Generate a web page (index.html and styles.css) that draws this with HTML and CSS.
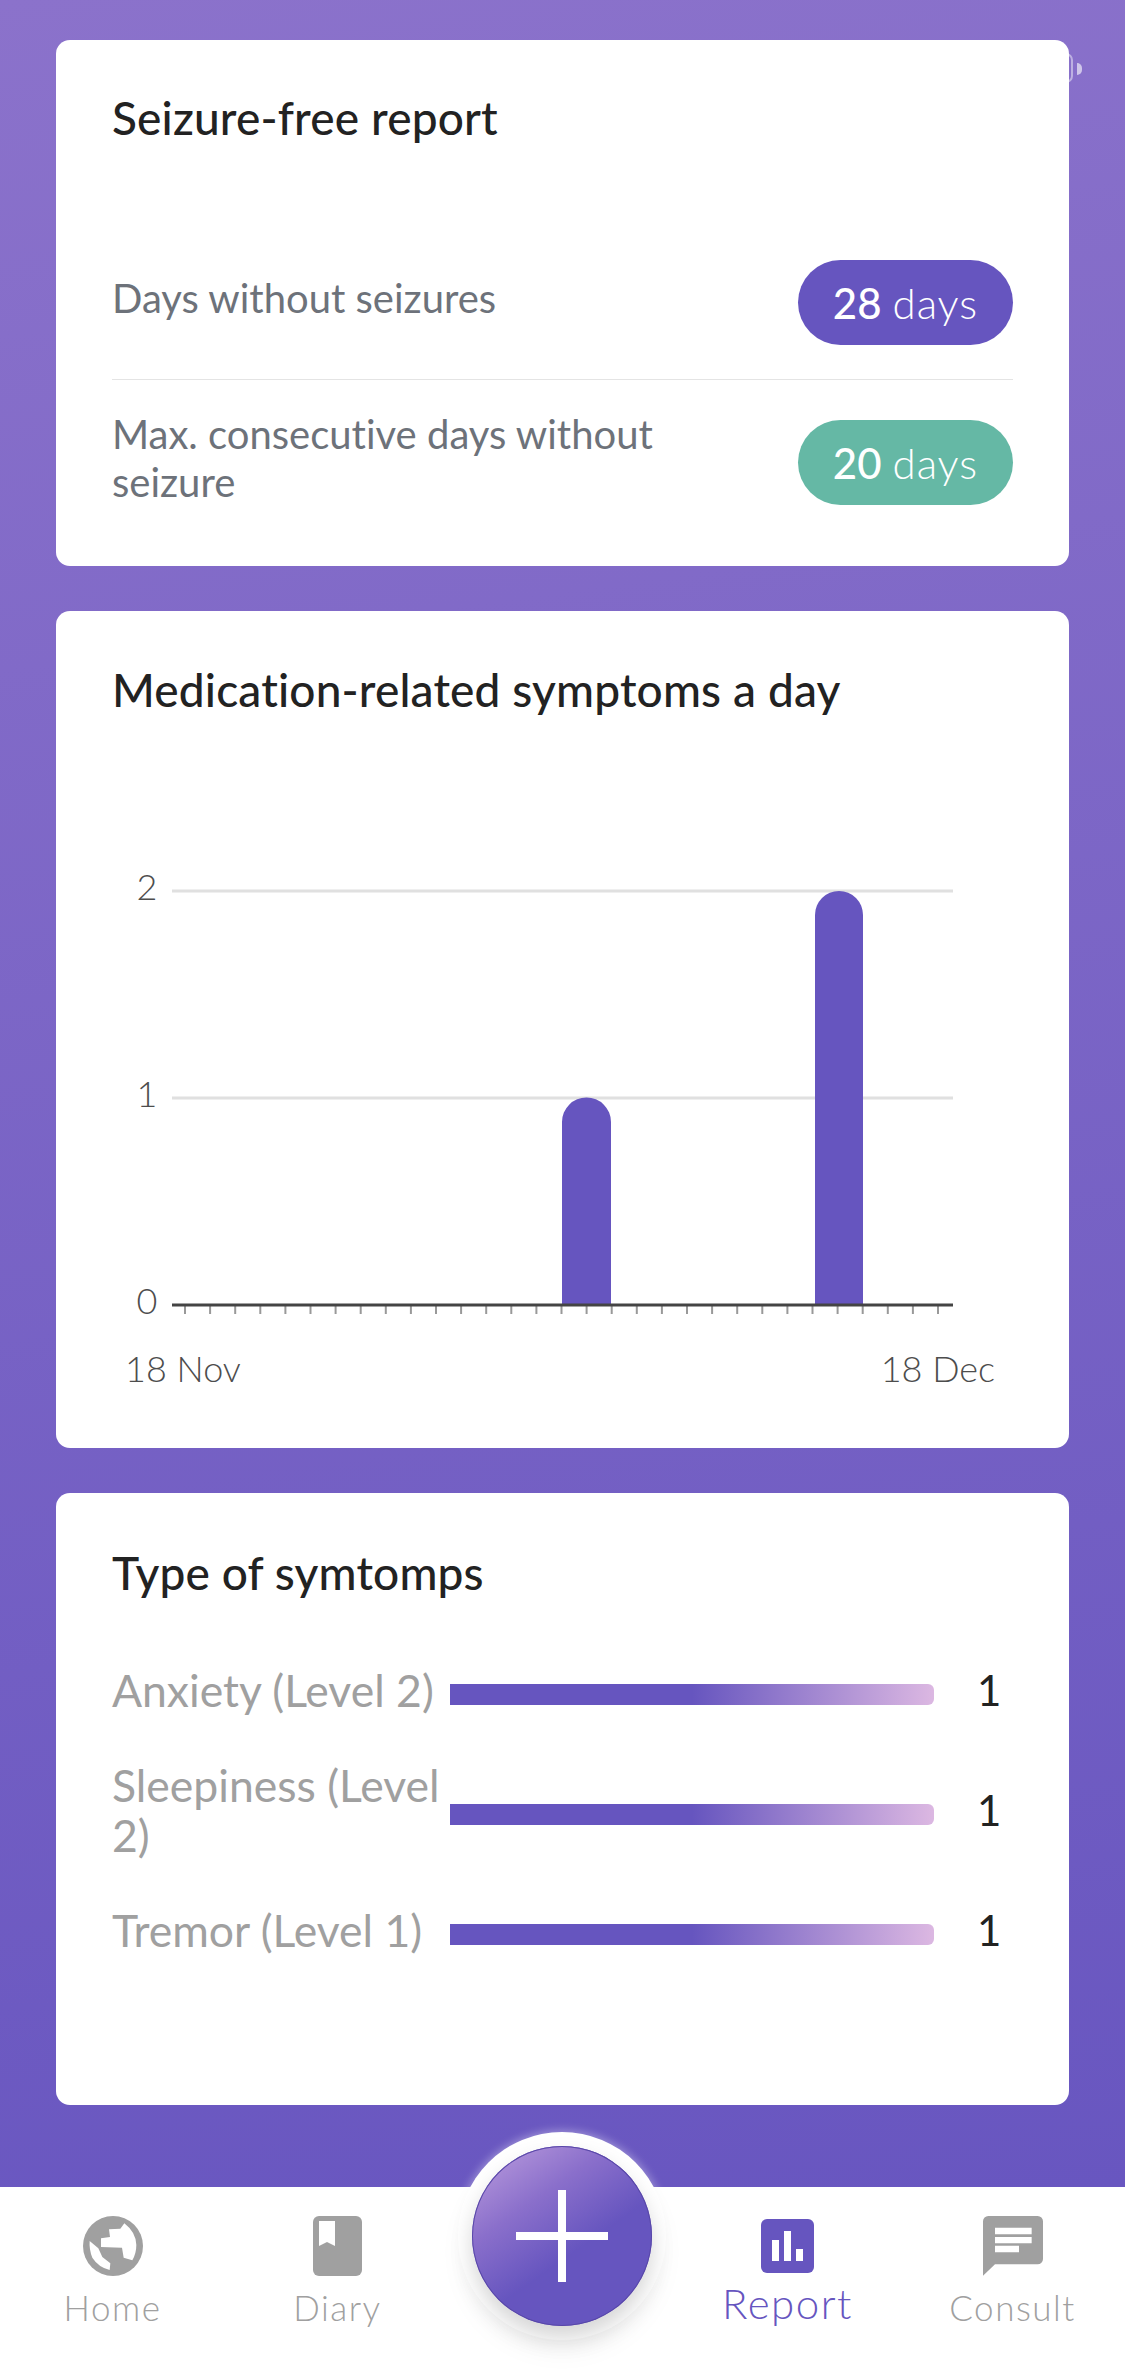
FILE: index.html
```html
<!DOCTYPE html>
<html>
<head>
    <title>Report</title>
    <link rel="stylesheet" href="styles.css">
</head>
<body>
    <div class="battery"></div>

    <main class="content">
        <section class="card seizure-card">
            <h2 class="card-title">Seizure-free report</h2>
            <div class="stat-row first">
                <p class="stat-label">Days without seizures</p>
                <div class="pill purple"><b>28</b> days</div>
            </div>
            <div class="stat-row second">
                <p class="stat-label">Max. consecutive days without seizure</p>
                <div class="pill green"><b>20</b> days</div>
            </div>
        </section>

        <section class="card chart-card">
            <h2 class="card-title">Medication-related symptoms a day</h2>
            <!-- viewBox uses page coordinates so the numbers stay easy to read -->
            <svg class="chart" viewBox="56 714 1013 734">
                <line class="grid" x1="172" y1="891" x2="953" y2="891"/>
                <line class="grid" x1="172" y1="1098" x2="953" y2="1098"/>
                <line class="ticks" x1="184" y1="1310" x2="942" y2="1310"/>
                <path class="bar" d="M562 1306V1122a24.500 24.500 0 0 1 49 0V1306Z"/>
                <path class="bar" d="M815 1306V915a24 24 0 0 1 48 0V1306Z"/>
                <line class="axis" x1="172" y1="1305" x2="953" y2="1305"/>
                <text x="147" y="900" text-anchor="middle">2</text>
                <text x="147" y="1107" text-anchor="middle">1</text>
                <text x="147" y="1314" text-anchor="middle">0</text>
                <text x="125" y="1382">18 Nov</text>
                <text x="995" y="1382" text-anchor="end">18 Dec</text>
            </svg>
        </section>

        <section class="card symptoms-card">
            <h2 class="card-title">Type of symtomps</h2>
            <div class="symptom-list">
                <div class="symptom">
                    <span class="symptom-name">Anxiety (Level 2)</span>
                    <span class="symptom-bar"></span>
                    <span class="symptom-count">1</span>
                </div>
                <div class="symptom">
                    <span class="symptom-name">Sleepiness (Level 2)</span>
                    <span class="symptom-bar"></span>
                    <span class="symptom-count">1</span>
                </div>
                <div class="symptom">
                    <span class="symptom-name">Tremor (Level 1)</span>
                    <span class="symptom-bar"></span>
                    <span class="symptom-count">1</span>
                </div>
            </div>
        </section>
    </main>

    <nav class="tabbar">
        <a class="tab">
            <span class="tab-icon">
                <svg width="60" height="60" viewBox="38 33 180 180">
                    <circle cx="128" cy="123" r="90" fill="#a0a0a0"/>
                    <path fill="#fff" d="M162 55L150 71L116 73L119 96L92 100L92 126L155 128L160 158L186 166Q198 145 198 120Q197 82 162 55Z"/>
                    <path fill="#fff" d="M58 108L84 130L96 156L120 175L118 195Q84 186 66 158Q56 134 58 108Z"/>
                </svg>
            </span>
            <span class="tab-label">Home</span>
        </a>
        <a class="tab">
            <span class="tab-icon">
                <svg width="49" height="60" viewBox="0 0 49 60">
                    <rect width="49" height="60" rx="6" fill="#a0a0a0"/>
                    <path fill="#fff" d="M6 5H22V30L14 26L6 30Z"/>
                </svg>
            </span>
            <span class="tab-label">Diary</span>
        </a>
        <div class="tab-spacer"></div>
        <a class="tab active">
            <span class="tab-icon">
                <svg width="53" height="54" viewBox="0 0 53 54">
                    <rect width="53" height="54" rx="6" fill="#6655bf"/>
                    <path fill="#fff" d="M11 21H18V42H11ZM23 12H30V42H23ZM35 30H42V42H35Z"/>
                </svg>
            </span>
            <span class="tab-label">Report</span>
        </a>
        <a class="tab">
            <span class="tab-icon">
                <svg width="60" height="60" viewBox="52 33 180 180">
                    <path fill="#a0a0a0" d="M68 33H216A16 16 0 0 1 232 49V162A16 16 0 0 1 216 178H88L52 212V49A16 16 0 0 1 68 33Z"/>
                    <path fill="#fff" d="M88 68H198V88H88ZM88 96H198V115H88ZM88 122H160V142H88Z"/>
                </svg>
            </span>
            <span class="tab-label">Consult</span>
        </a>

        <button class="add-btn">
            <svg width="92" height="92" viewBox="0 0 92 92">
                <path fill="#fff" d="M42 0H50V42H92V50H50V92H42V50H0V42H42Z"/>
            </svg>
        </button>
    </nav>
</body>
</html>
```

FILE: styles.css
```css
* {
    box-sizing: border-box;
}
body {
    margin: 0;
    width: 1125px;
    height: 2375px;
    display: flex;
    flex-direction: column;
    overflow: hidden;
    font-family: "Lato", "Open Sans", sans-serif;
    font-variant-ligatures: none;
    background-color: #fff;
}

/* scrolled-away status bar, only the battery tip shows past the card */
.battery {
    position: absolute;
    top: 53px;
    left: 1040px;
    width: 33px;
    height: 30px;
    border: 2px solid rgba(255, 255, 255, 0.45);
    border-radius: 7px;
}
.battery::after {
    content: "";
    position: absolute;
    top: 8px;
    left: 35px;
    width: 5px;
    height: 12px;
    border-radius: 0 6px 6px 0;
    background: rgba(255, 255, 255, 0.6);
}

.content {
    flex: 1;
    display: flex;
    flex-direction: column;
    gap: 45px;
    padding: 40px 56px 0;
    background: linear-gradient(172deg, #8b72cb 0%, #6856c0 100%);
}
.card {
    position: relative;
    background: #fff;
    border-radius: 14px;
}
.card-title {
    margin: 0;
    font-size: 46px;
    line-height: 48px;
    font-weight: 500;
    letter-spacing: 0.15px;
    color: #222;
}

/* seizure-free card */
.seizure-card {
    height: 526px;
    padding: 54px 56px 0;
}
.stat-row {
    display: flex;
    align-items: center;
    justify-content: space-between;
}
.stat-row.first {
    margin-top: 118px;
    padding-bottom: 34px;
    border-bottom: 1px solid #e4e4e4;
}
.stat-row.second {
    padding-top: 40px;
}
.stat-label {
    margin: 0 0 10px;
    max-width: 600px;
    font-size: 40px;
    line-height: 48px;
    color: #6d727a;
}
/* two lines, taller than the pill, should not push the row down */
.stat-row.second .stat-label {
    margin: -10px 0 -1px;
}
.pill {
    width: 215px;
    height: 85px;
    border-radius: 43px;
    display: flex;
    align-items: center;
    justify-content: center;
    gap: 11px;
    font-size: 42px;
    font-weight: 300;
    letter-spacing: 1px;
    color: #fff;
}
.pill b {
    font-weight: 500;
    letter-spacing: 0;
}
.purple {
    background: #6655bf;
}
.green {
    background: #65b8a5;
}

/* symptoms per day chart */
.chart-card {
    height: 837px;
}
.chart-card .card-title {
    padding: 55px 56px 0;
    height: 103px;
}
.chart {
    display: block;
    width: 1013px;
    height: 734px;
}
.chart text {
    font-size: 36px;
    font-weight: 300;
    fill: #4d4d4d;
}
.grid {
    stroke: #e0e0e0;
    stroke-width: 3;
}
.axis {
    stroke: #444;
    stroke-width: 3;
}
.ticks {
    stroke: #999;
    stroke-width: 8;
    stroke-dasharray: 2 23.1;
}
.bar {
    fill: #6655bf;
}

/* symptom types */
.symptoms-card {
    height: 612px;
    padding: 56px 56px 0;
}
.symptom-list {
    display: flex;
    flex-direction: column;
    gap: 42px;
    margin-top: 68px;
}
.symptom {
    display: flex;
    align-items: center;
}
.symptom-name {
    width: 338px;
    flex-shrink: 0;
    margin-bottom: 3px;
    font-size: 44.5px;
    line-height: 50px;
    color: #a0a0a0;
}
.symptom-bar {
    width: 484px;
    height: 21px;
    margin-top: 6px;
    border-radius: 0 6px 6px 0;
    background: linear-gradient(90deg, #6655bf 0%, #6655bf 50%, #dcb8e2 100%);
}
.symptom-count {
    margin-left: 43px;
    margin-bottom: 4px;
    font-size: 42px;
    line-height: 46px;
    color: #222;
}

/* bottom tab bar */
.tabbar {
    position: relative;
    height: 188px;
    display: grid;
    grid-template-columns: repeat(5, 225px);
    padding-top: 29px;
    background: #fff;
}
.tab {
    display: flex;
    flex-direction: column;
    align-items: center;
}
.tab-icon {
    height: 60px;
    display: flex;
    align-items: center;
    justify-content: center;
}
.tab-label {
    margin-top: 9px;
    font-size: 35px;
    line-height: 44px;
    font-weight: 300;
    letter-spacing: 1.5px;
    color: #a0a0a0;
}
.tab.active .tab-label {
    margin-top: 5px;
    font-size: 42px;
    color: #6655bf;
}
.add-btn {
    position: absolute;
    top: -41px;
    left: 472px;
    width: 180px;
    height: 180px;
    padding: 0;
    border: none;
    border-radius: 50%;
    display: flex;
    align-items: center;
    justify-content: center;
    background: linear-gradient(145deg, #b294da 8%, #8a6fcb 32%, #6655bf 58%);
    box-shadow: inset 0 0 0 1px #5847a8, 0 12px 22px rgba(0, 0, 0, 0.17), 0 0 0 14px #fff, 0 0 10px 15px rgba(255, 255, 255, 0.4), 0 16px 28px 8px rgba(0, 0, 0, 0.05);
}
```
